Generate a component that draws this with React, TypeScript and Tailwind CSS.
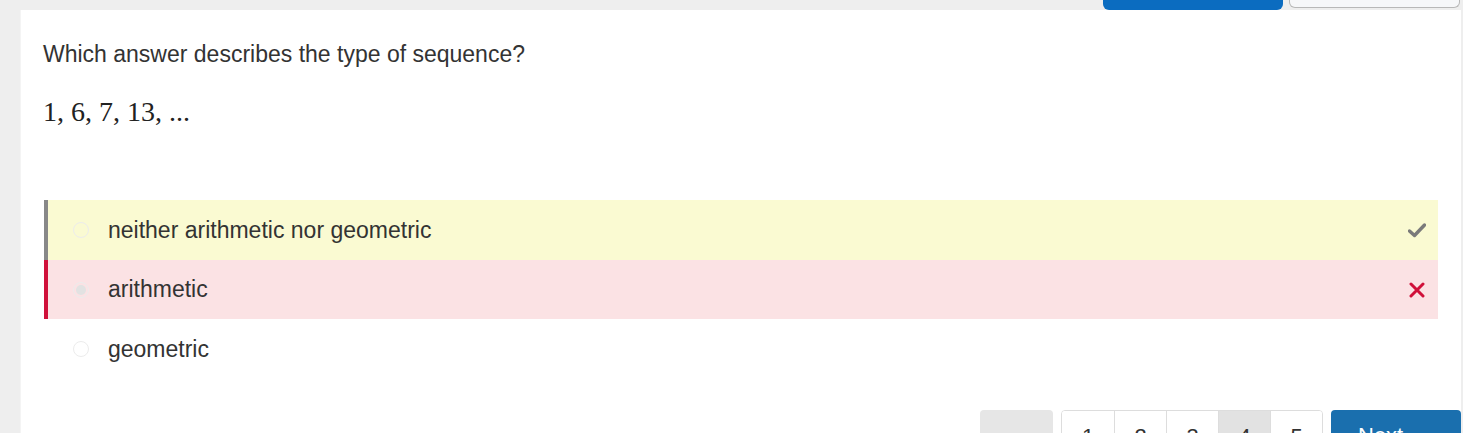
import React from "react";

const options = [
  { label: "neither arithmetic nor geometric", state: "correct" },
  { label: "arithmetic", state: "wrong" },
  { label: "geometric", state: "none" },
];

function Check() {
  return (
    <svg width="18" height="15" viewBox="0 0 18 15">
      <path d="M1.5 8 L6.5 12.5 L16.5 2" fill="none" stroke="#7a7a7a" strokeWidth="3.4" strokeLinecap="round" strokeLinejoin="round" />
    </svg>
  );
}

function Cross() {
  return (
    <svg width="16" height="16" viewBox="0 0 16 16">
      <path d="M2 2 L14 14 M14 2 L2 14" fill="none" stroke="#d0103a" strokeWidth="3" strokeLinecap="round" />
    </svg>
  );
}

export default function App() {
  return (
    <div className="w-[1463px] h-[433px] overflow-hidden bg-[#eeeeee] pl-[20px] pr-[2px]" style={{ fontFamily: '"Liberation Sans", Arial, sans-serif' }}>
      <div className="h-[10px] flex justify-end items-start gap-[6px] pr-[1px]">
        <div className="w-[180px] h-[10px] bg-[#0b6cc0] rounded-b-[6px]" />
        <div className="w-[171px] h-[8px] bg-[#f6f7f9] border border-t-0 border-[#b8b8b8] rounded-b-[6px]" />
      </div>
      <div className="bg-white h-[423px] pt-[30px] pl-[22px] pr-[23px] border-l border-[#f4f4f4]">
        <div className="text-[23px] leading-[28px] text-[#333333]">Which answer describes the type of sequence?</div>
        <div className="mt-[28px] text-[28px] leading-[32px] text-[#222]" style={{ fontFamily: '"Liberation Serif", "Times New Roman", serif' }}>
          1, 6, 7, 13, ...
        </div>
        <div className="mt-[72px] ml-[1px] flex flex-col">
          {options.map((o) => (
            <div
              key={o.label}
              className={
                o.state === "correct"
                  ? "h-[60px] flex items-center border-l-4 border-[#888888] bg-[#fafad2]"
                  : o.state === "wrong"
                  ? "h-[59px] flex items-center border-l-4 border-[#d0103a] bg-[#fbe2e4]"
                  : "h-[60px] flex items-center border-l-4 border-transparent"
              }
            >
              <div className="ml-[25px] w-[16px] h-[16px] rounded-full border border-[#ececec] flex items-center justify-center">
                {o.state === "wrong" && <div className="w-[10px] h-[10px] rounded-full bg-[#e2e2e2]" />}
              </div>
              <div className="ml-[19px] text-[23px] text-[#333333] flex-1">{o.label}</div>
              <div className="w-[24px] mr-[9px] flex justify-center">
                {o.state === "correct" && <Check />}
                {o.state === "wrong" && <Cross />}
              </div>
            </div>
          ))}
        </div>
        <div className="mt-[31px] flex justify-end mr-[-23px]">
          <div className="w-[73px] h-[46px] bg-[#e6e6e6] rounded-[4px] mr-[8px]" />
          <div className="flex h-[46px] border border-[#dddddd] rounded-[4px] overflow-hidden text-[22px] leading-[26px] text-[#333]">
            {["1", "2", "3", "4", "5"].map((n, i) => (
              <div
                key={n}
                className={
                  (i === 3 ? "bg-[#e2e2e2] " : "bg-white ") +
                  (i > 0 ? "border-l border-[#dddddd] " : "") +
                  "w-[52px] flex justify-center pt-[13px]"
                }
              >
                {n}
              </div>
            ))}
          </div>
          <div className="ml-[8px] w-[130px] h-[46px] bg-[#1a6fae] rounded-[4px] text-white text-[22px] leading-[26px] pt-[13px] pl-[27px]">Next</div>
        </div>
      </div>
    </div>
  );
}
